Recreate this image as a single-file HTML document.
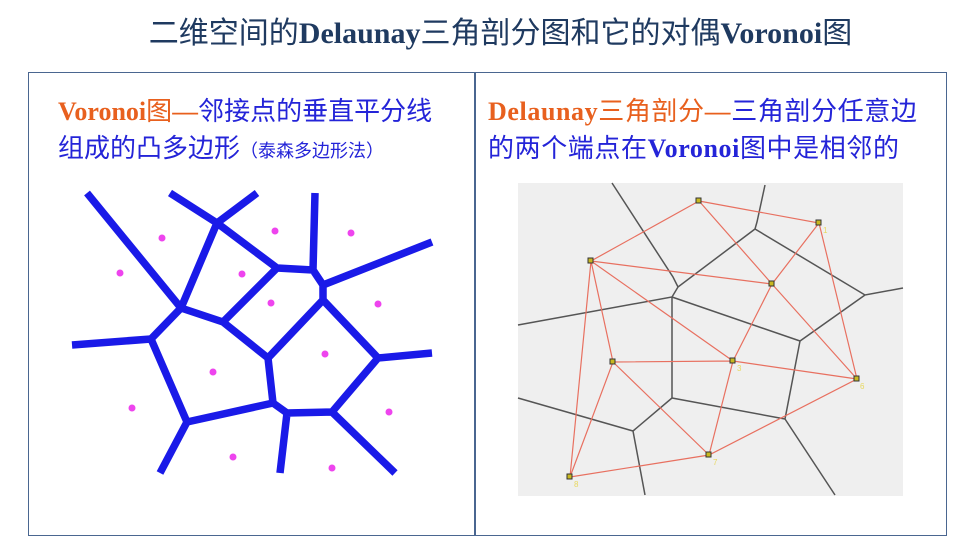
<!DOCTYPE html>
<html><head><meta charset="utf-8"><style>
body{margin:0;width:969px;height:550px;background:#fff;position:relative;overflow:hidden;font-family:"Liberation Serif","Noto Serif CJK SC",serif}
.t{position:absolute;left:16px;width:969px;top:8px;text-align:center;font-size:30px;color:#1f3a60;font-weight:bold;white-space:nowrap}
.t span{font-weight:normal;font-family:"Liberation Sans","Noto Sans CJK SC",sans-serif}
.box{position:absolute;left:28px;top:72px;width:917px;height:462px;border:1.5px solid #4a6690}
.div{position:absolute;left:474px;top:72px;width:1.5px;height:463px;background:#4a6690}
.h{position:absolute;font-size:26px;line-height:36px;color:#2424d8;font-family:"Liberation Sans","Noto Sans CJK SC",sans-serif;white-space:nowrap}
.h b{font-family:"Liberation Serif",serif}
.o{color:#e8601e}
.s{font-size:18px}
</style></head><body>
<div class="t"><span>二维空间的</span>Delaunay<span>三角剖分图和它的对偶</span>Voronoi<span>图</span></div>
<div class="box"></div><div class="div"></div>
<div class="h" style="left:58px;top:93px"><span class="o"><b>Voronoi</b>图—</span>邻接点的垂直平分线<br>组成的凸多边形<span class="s">（泰森多边形法）</span></div>
<div class="h" style="left:488px;top:93px;letter-spacing:0.6px"><span class="o"><b>Delaunay</b>三角剖分—</span>三角剖分任意边<br>的两个端点在<b>Voronoi</b>图中是相邻的</div>
<svg width="969" height="550" style="position:absolute;left:0;top:0">
<g stroke="#1a1ae8" stroke-width="7.5" fill="none" stroke-linecap="butt" stroke-linejoin="round">
<path d="M87 193L181 308L217 223L170 193M217 223L257 193M217 223L277 268L313 270L323 285L323 300L268 358L223 322L181 308L151 339L72 345M315 193L313 270M323 285L432 242M223 322L277 268M151 339L187 422L273 403L268 358M323 300L378 358L432 353M378 358L332 412L287 413L273 403M187 422L160 473M287 413L280 473M332 412L395 473"/>
</g>
<g fill="#ee44ee">
<circle cx="162" cy="238" r="3.5"/><circle cx="120" cy="273" r="3.5"/><circle cx="242" cy="274" r="3.5"/><circle cx="275" cy="231" r="3.5"/><circle cx="351" cy="233" r="3.5"/><circle cx="271" cy="303" r="3.5"/><circle cx="378" cy="304" r="3.5"/><circle cx="325" cy="354" r="3.5"/><circle cx="213" cy="372" r="3.5"/><circle cx="132" cy="408" r="3.5"/><circle cx="389" cy="412" r="3.5"/><circle cx="233" cy="457" r="3.5"/><circle cx="332" cy="468" r="3.5"/>
</g>
<rect x="518" y="183" width="385" height="313" fill="#efefef"/>
<g stroke="#555" stroke-width="1.5" fill="none">
<path d="M612 183L673 277L678 287L755 229L757 222L765 185M755 229L865 295L903 288M678 287L672 297L518 325M672 297L800 341L865 295M800 341L785 419L835 495M672 297L672 398L633 431L518 398M633 431L645 495M672 398L785 419"/>
</g>
<g stroke="#e87060" stroke-width="1.2" fill="none">
<path d="M699 201L819 223L857 379L709 455L570 477L591 261L699 201L772 284L819 223M591 261L772 284L733 361L709 455L613 362L733 361L857 379L772 284M591 261L733 361M591 261L613 362L570 477"/>
</g>
<g fill="#c8b820" stroke="#333" stroke-width="1">
<rect x="696" y="198" width="5" height="5"/><rect x="816" y="220" width="5" height="5"/><rect x="588" y="258" width="5" height="5"/><rect x="769" y="281" width="5" height="5"/><rect x="610" y="359" width="5" height="5"/><rect x="730" y="358" width="5" height="5"/><rect x="854" y="376" width="5" height="5"/><rect x="706" y="452" width="5" height="5"/><rect x="567" y="474" width="5" height="5"/>
</g>
<g fill="#e8d860" font-size="8" font-family="Liberation Sans,sans-serif">
<text x="823" y="233">1</text><text x="737" y="371">3</text><text x="860" y="389">6</text><text x="713" y="465">7</text><text x="574" y="487">8</text>
</g>
</svg>
</body></html>
